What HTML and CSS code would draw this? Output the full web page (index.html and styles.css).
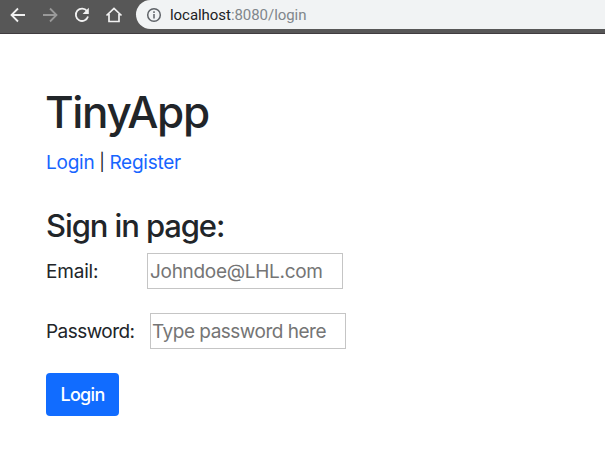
FILE: index.html
```html
<!DOCTYPE html>
<html lang="en">
<head>
<meta charset="utf-8">
<title>TinyApp</title>
<link rel="stylesheet" href="styles.css">
</head>
<body>
<div class="toolbar">
  <svg class="nav" viewBox="0 0 18 18"><path d="M16 9H3M9 2.500L2.500 9L9 15.500"/></svg>
  <svg class="nav dim" viewBox="0 0 18 18"><path d="M2 9H15M9 2.500L15.500 9L9 15.500"/></svg>
  <svg class="nav" viewBox="0 0 18 18"><path d="M14 5A6.200 6.200 0 1 0 15 10.500"/><path class="fill" d="M15.800 1.800V8H9.600Z"/></svg>
  <svg class="nav home" viewBox="0 0 18 18"><path d="M1.500 9.500L9 2.500L16.500 9.500M4 8V15.500H14V8"/></svg>
  <div class="address">
    <svg class="info" viewBox="0 0 16 16"><circle cx="8" cy="8" r="6.300"/><path d="M8 7V11.500M8 4.300V5.900"/></svg>
    <span class="host">localhost</span><span class="path">:8080/login</span>
  </div>
</div>
<main class="page">
  <h1>TinyApp</h1>
  <nav class="links"><a href="#">Login</a><span class="divider">|</span><a href="#">Register</a></nav>
  <h2>Sign in page:</h2>
  <form>
    <div class="field email"><label for="email">Email:</label><input id="email" type="email" placeholder="Johndoe@LHL.com"></div>
    <div class="field password"><label for="password">Password:</label><input id="password" type="password" placeholder="Type password here"></div>
    <button type="button">Login</button>
  </form>
</main>
</body>
</html>
```

FILE: styles.css
```css
* { box-sizing: border-box; }
body { margin: 0; background: #fff; color: #212529; font-family: Inter, sans-serif; font-size: 19px; overflow: hidden; }
.toolbar { display: flex; align-items: center; height: 34px; padding: 0 0 4px 9px; background: #575757; border-bottom: 1px solid #403c3f; }
.nav { width: 18px; height: 18px; margin-right: 14px; flex: none; fill: none; stroke: #f1f1f1; stroke-width: 1.8; }
.nav.dim { stroke: #999; }
.nav .fill { fill: #f1f1f1; stroke: none; }
.nav.home { stroke-width: 1.7; }
.address { display: flex; align-items: center; flex: 1; height: 29px; margin-left: -1px; padding-left: 10px; border-radius: 15px 0 0 15px; background: #f1f3f4; font-family: Roboto, sans-serif; font-size: 15px; letter-spacing: -.05px; }
.info { width: 16px; height: 16px; margin-right: 8px; fill: none; stroke: #5f6368; stroke-width: 1.5; }
.host { color: #202124; }
.path { color: #80868b; }
.page { padding: 51px 46px 0; }
h1 { margin: 0 0 0 -1px; padding-top: 1px; font-size: 44px; line-height: 53px; font-weight: 500; letter-spacing: -1.4px; }
.links { display: flex; margin-top: 10px; line-height: 27px; letter-spacing: -.25px; }
.divider { width: 15px; text-align: center; font-size: 17px; }
a { color: #1765ff; text-decoration: none; }
h2 { margin: 31px 0 0; font-size: 31px; line-height: 38px; font-weight: 500; letter-spacing: -1.1px; }
.field { display: flex; align-items: center; height: 36px; margin-top: 8px; }
.email label { width: 101px; letter-spacing: -.2px; }
.password { margin-top: 24px; }
.password label { width: 104px; letter-spacing: -.55px; }
input { width: 196px; height: 36px; border: 1px solid #c5c5c5; padding: 1px 2px; font: inherit; letter-spacing: -.3px; }
#password { padding-left: 1px; letter-spacing: -.5px; }
input::placeholder { color: #757575; opacity: 1; }
button { width: 73px; height: 43px; margin-top: 24px; padding: 0; border: 0; border-radius: 4px; background: #116cff; color: #fff; font: inherit; font-size: 18px; font-weight: 500; letter-spacing: -.7px; }
```
